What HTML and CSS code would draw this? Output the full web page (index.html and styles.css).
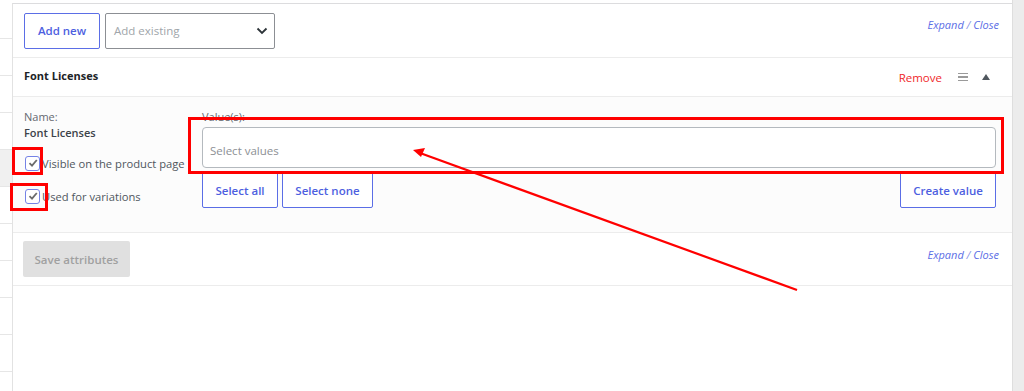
FILE: index.html
```html
<!DOCTYPE html>
<html lang="en">
<head>
    <meta charset="UTF-8">
    <title>Attributes</title>
    <link rel="stylesheet" href="styles.css">
</head>
<body>
    <div class="page">
        <!-- columna izquierda (lista cortada) -->
        <div class="side">
            <div class="side-row"></div>
            <div class="side-row"></div>
            <div class="side-row"></div>
            <div class="side-row"></div>
            <div class="side-row active"></div>
            <div class="side-row"></div>
            <div class="side-row"></div>
            <div class="side-row"></div>
            <div class="side-row"></div>
            <div class="side-row"></div>
        </div>

        <div class="panel">
            <div class="toolbar">
                <button class="btn">Add new</button>
                <div class="select">
                    <span>Add existing</span>
                    <svg width="12" height="8" viewBox="0 0 12 8"><path d="M1.5 1.5 6 6l4.5-4.5" fill="none" stroke="#2c3338" stroke-width="1.8"/></svg>
                </div>
                <div class="links"><a>Expand</a> / <a>Close</a></div>
            </div>

            <div class="attr-head">
                <strong>Font Licenses</strong>
                <div class="attr-actions">
                    <a class="remove">Remove</a>
                    <span class="handle"><i></i><i></i><i></i></span>
                    <span class="toggle"></span>
                </div>
            </div>

            <div class="attr-body">
                <div class="attr-left">
                    <div class="label">Name:</div>
                    <div class="name">Font Licenses</div>
                    <label class="check"><span class="box">
                        <svg width="10" height="10" viewBox="0 0 10 10"><path d="M1.5 5.2 4 7.6 8.8 2" fill="none" stroke="#6b6b6b" stroke-width="1.8"/></svg>
                    </span>Visible on the product page</label>
                    <label class="check"><span class="box">
                        <svg width="10" height="10" viewBox="0 0 10 10"><path d="M1.5 5.2 4 7.6 8.8 2" fill="none" stroke="#6b6b6b" stroke-width="1.8"/></svg>
                    </span>Used for variations</label>
                </div>
                <div class="attr-right">
                    <div class="label">Value(s):</div>
                    <div class="values">Select values</div>
                    <div class="value-btns">
                        <button class="btn">Select all</button>
                        <button class="btn">Select none</button>
                        <button class="btn push">Create value</button>
                    </div>
                </div>
            </div>

            <div class="footer">
                <button class="btn-save">Save attributes</button>
                <div class="links"><a>Expand</a> / <a>Close</a></div>
            </div>
        </div>

        <div class="edge"></div>

        <!-- marcas rojas sobre la captura -->
        <svg class="marks" width="1024" height="391" viewBox="0 0 1024 391">
            <rect x="189.5" y="118.5" width="813" height="54" fill="none" stroke="#ff0000" stroke-width="3"/>
            <rect x="13.5" y="148.5" width="28" height="25" fill="none" stroke="#ff0000" stroke-width="3"/>
            <rect x="11.5" y="184.5" width="35" height="25" fill="none" stroke="#ff0000" stroke-width="3"/>
            <line x1="797" y1="290" x2="420" y2="153" stroke="#ff0000" stroke-width="2.2"/>
            <path d="M413 150 L425 148 L421 157 Z" fill="#ff0000"/>
        </svg>
    </div>
</body>
</html>
```

FILE: styles.css
```css
body {
    margin: 0;
    font-family: "Open Sans", "Noto Sans", Arial, sans-serif;
    font-size: 11px;
    color: #50575e;
    background-color: #ffffff;
}

.page {
    position: relative;
    display: flex;
    height: 391px;
    overflow: hidden;
}

.side {
    width: 12px;
    padding-top: 2px;
}

.side-row {
    height: 36px;
    border-bottom: 1px solid #e6e6e6;
}

.side-row.active {
    background-color: #f0f0f0;
}

.panel {
    flex: 1;
    margin-top: 3px;
    border-top: 1px solid #dcdcde;
    border-left: 1px solid #e2e2e2;
}

.edge {
    width: 11px;
    background-color: #ececec;
    border-left: 1px solid #dedede;
}

button {
    font-family: inherit;
}

.btn {
    height: 36px;
    padding: 0 14px;
    background: #ffffff;
    border: 1px solid #5b6ee6;
    border-radius: 2px;
    color: #4e5fdf;
    font-size: 11.5px;
    font-weight: 600;
}

.toolbar {
    display: flex;
    align-items: center;
    height: 53px;
    padding: 0 13px 0 11px;
    border-bottom: 1px solid #ececec;
}

.toolbar .btn {
    width: 76px;
    padding: 0;
}

.select {
    display: flex;
    align-items: center;
    justify-content: space-between;
    width: 154px;
    height: 34px;
    margin-left: 5px;
    padding: 0 6px 0 8px;
    border: 1px solid #8c8f94;
    border-radius: 2px;
    color: #a0a5aa;
    font-size: 11.5px;
}

.links {
    margin-left: auto;
    margin-bottom: 12px;
    font-style: italic;
    font-size: 11px;
    color: #8a95e6;
}

.footer .links {
    margin-bottom: 10px;
}

.links a {
    color: #5b6ee6;
}

.attr-head {
    display: flex;
    align-items: center;
    height: 38px;
    padding: 0 22px 0 11px;
    border-bottom: 1px solid #ececec;
}

.attr-head strong {
    margin-bottom: 4px;
    color: #1d2327;
    font-size: 11px;
    font-weight: 700;
}

.attr-actions {
    display: flex;
    align-items: center;
    margin-left: auto;
}

.remove {
    color: #f0282a;
    font-size: 11.5px;
}

.handle {
    display: flex;
    flex-direction: column;
    gap: 2px;
    margin-left: 16px;
}

.handle i {
    display: block;
    width: 10px;
    height: 1.5px;
    background-color: #9a9a9a;
}

.toggle {
    width: 0;
    height: 0;
    margin-left: 14px;
    border-left: 4px solid transparent;
    border-right: 4px solid transparent;
    border-bottom: 6px solid #50575e;
}

.attr-body {
    display: flex;
    height: 114px;
    padding: 12px 16px 9px 11px;
    background-color: #fcfcfc;
    border-bottom: 1px solid #ececec;
}

.attr-left {
    width: 178px;
}

.label {
    line-height: 15px;
    color: #646970;
}

.name {
    line-height: 17px;
    color: #3c434a;
    font-weight: 600;
}

.check {
    display: flex;
    align-items: center;
    height: 18px;
    color: #50575e;
    font-size: 11.2px;
}

.check:first-of-type {
    margin-top: 13px;
}

.check + .check {
    margin-top: 15px;
}

.box {
    display: flex;
    align-items: center;
    justify-content: center;
    width: 13px;
    height: 13px;
    margin: 0 2px 0 1px;
    border: 1px solid #7583e6;
    border-radius: 3px;
    background: #ffffff;
}

.attr-right {
    flex: 1;
}

.values {
    box-sizing: border-box;
    display: flex;
    align-items: center;
    height: 41px;
    margin-top: 3px;
    padding: 6px 7px 0;
    border: 1px solid #b4b9be;
    border-radius: 4px;
    background: #ffffff;
    color: #8c8f94;
    font-size: 11.5px;
}

.value-btns {
    display: flex;
    gap: 4px;
    margin-top: 4px;
}

.value-btns .btn {
    height: 36px;
}

.value-btns .btn:first-child {
    width: 76px;
    padding: 0;
}

.value-btns .btn:nth-child(2) {
    width: 91px;
    padding: 0;
}

.value-btns .push {
    width: 96px;
    margin-left: auto;
    padding: 0;
}

.footer {
    display: flex;
    align-items: center;
    height: 52px;
    padding: 0 13px 0 10px;
    border-bottom: 1px solid #ececec;
}

.btn-save {
    width: 107px;
    height: 36px;
    border: none;
    border-radius: 2px;
    background-color: #e0e0e0;
    color: #a0a0a0;
    font-size: 11.5px;
    font-weight: 600;
}

.marks {
    position: absolute;
    left: 0;
    top: 0;
    pointer-events: none;
}
```
